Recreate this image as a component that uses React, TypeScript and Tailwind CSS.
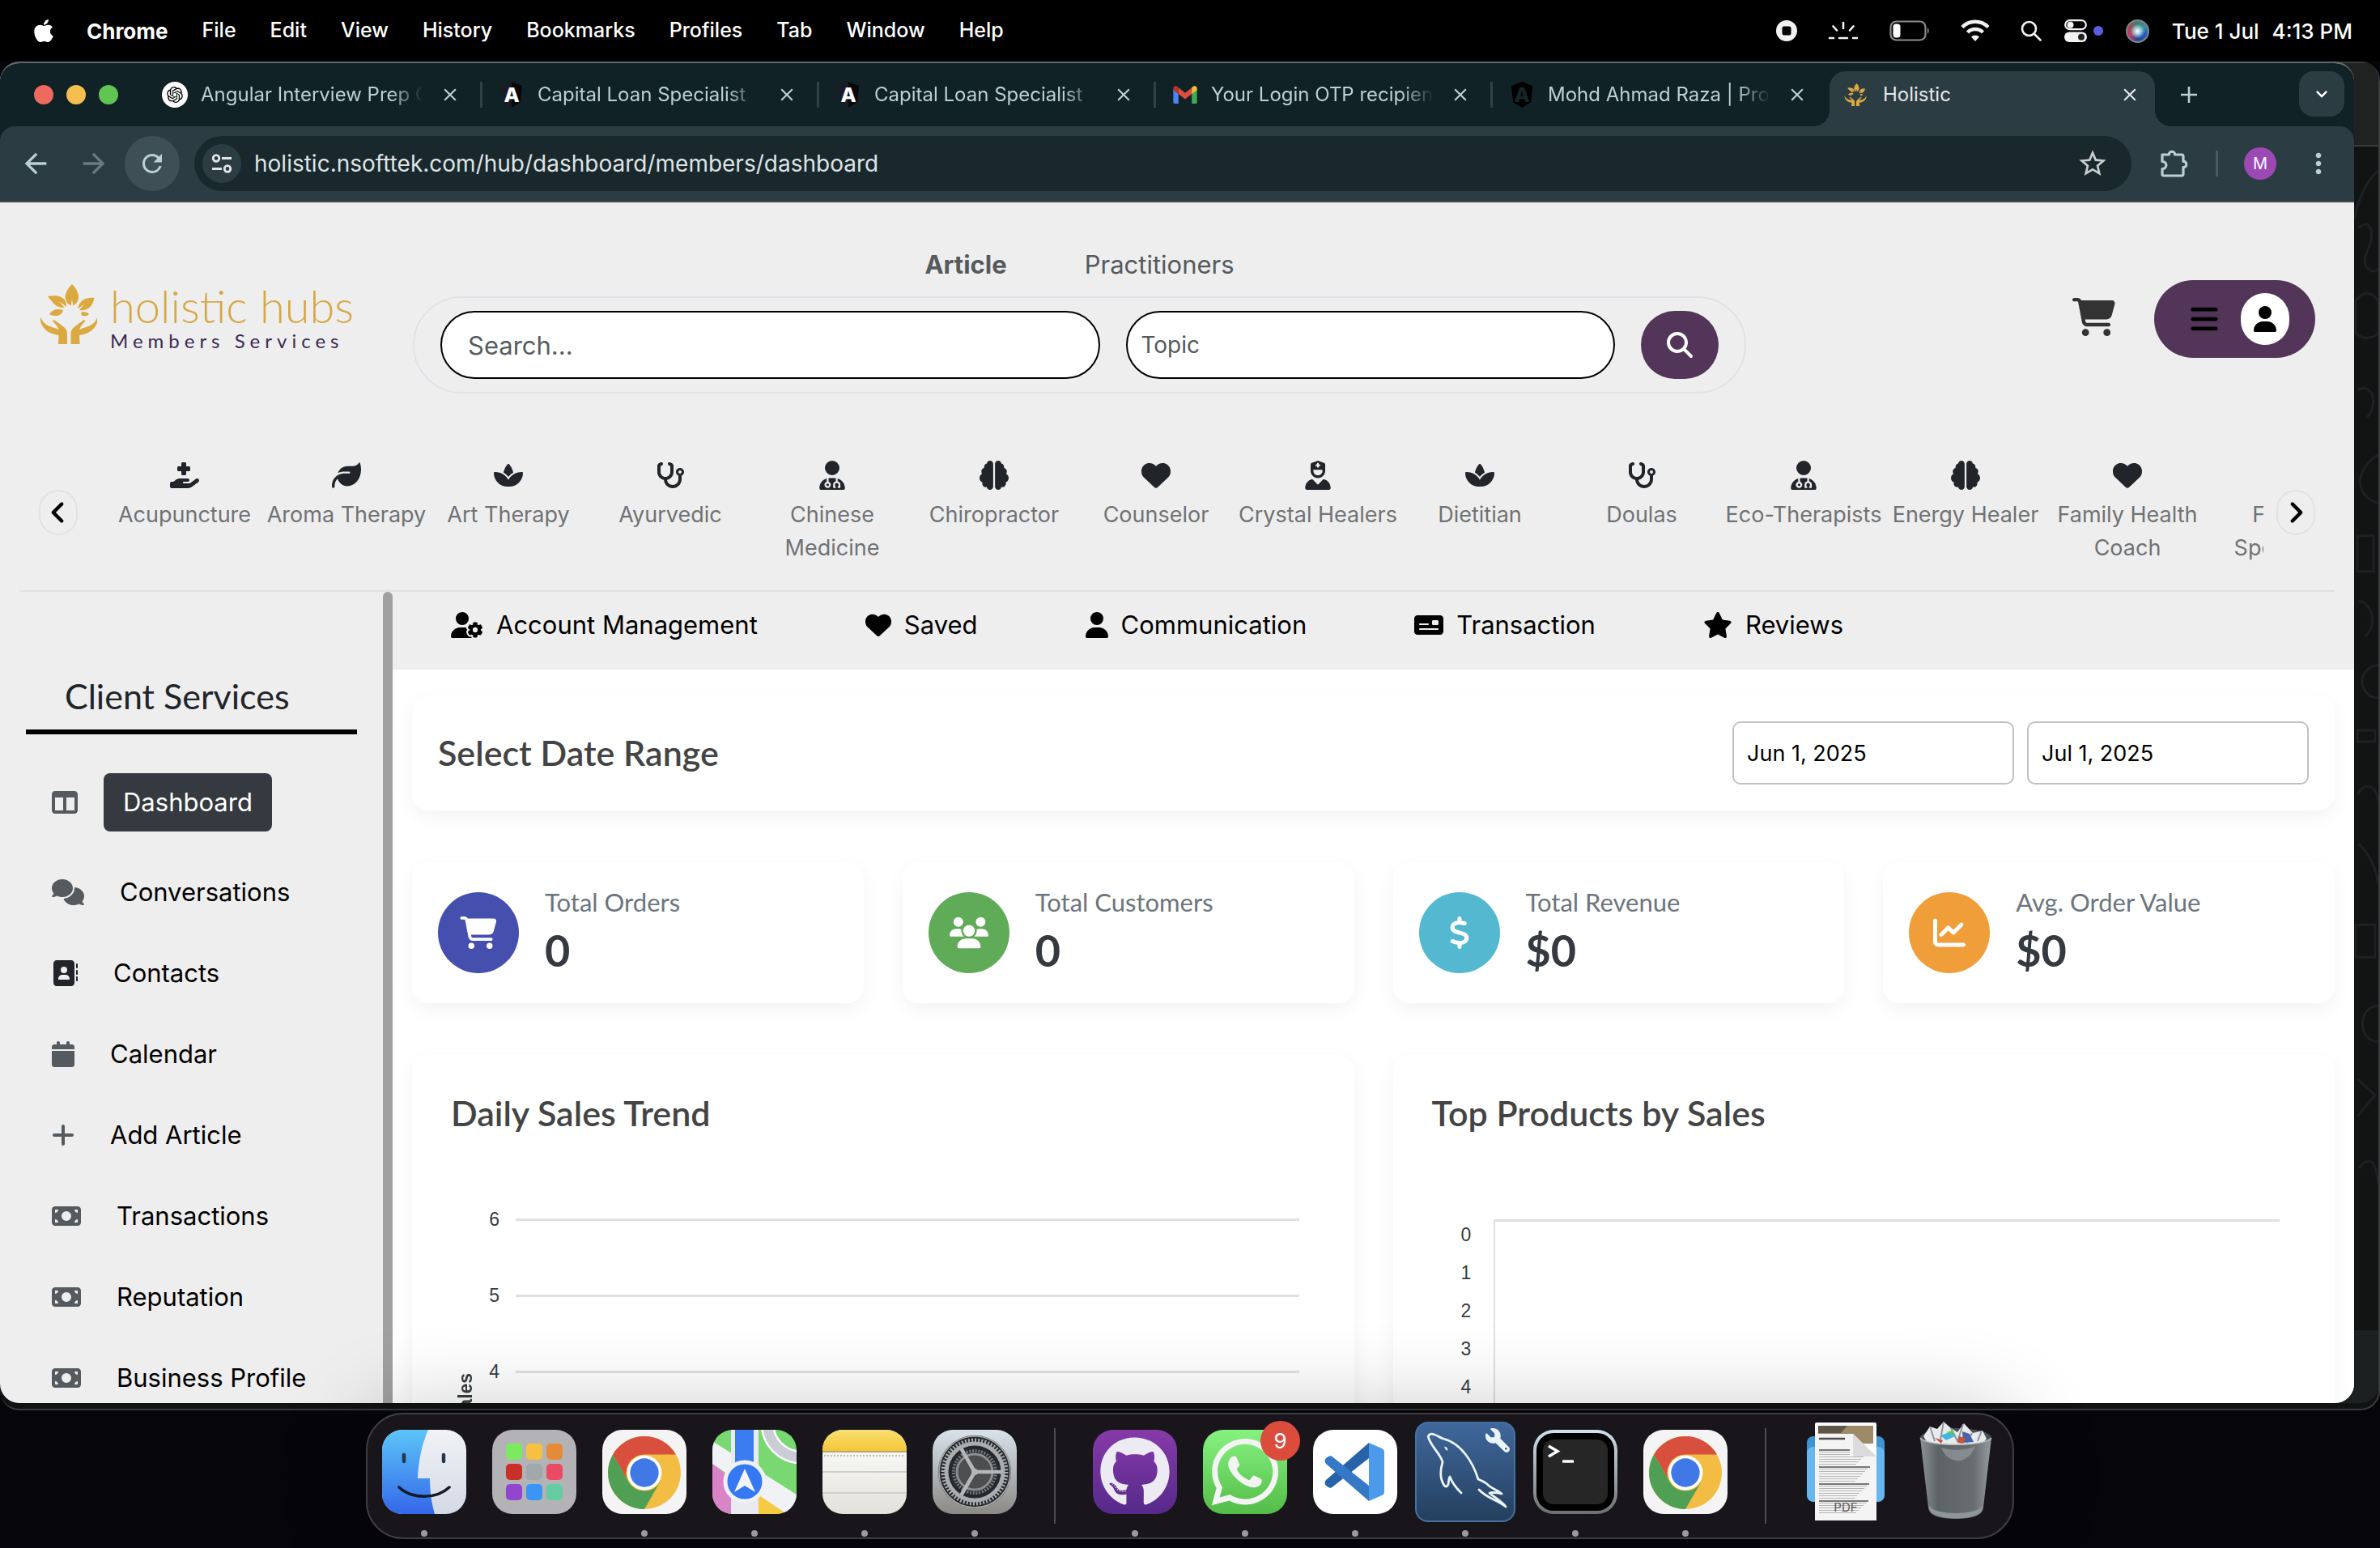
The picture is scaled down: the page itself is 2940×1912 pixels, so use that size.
import React from "react";
import {
  FaAddressBook, FaApple, FaBars, FaBrain, FaCalendar, FaCartShopping, FaChartLine, FaComments, FaDollarSign,
  FaGithub, FaHandHoldingMedical, FaHeart, FaLeaf, FaMagnifyingGlass, FaMoneyBill, FaMoneyCheck, FaPlus, FaSpa,
  FaStar, FaStethoscope, FaTableColumns, FaUser, FaUserDoctor, FaUserGear, FaUserNurse, FaUsers, FaWhatsapp, FaWrench,
} from "react-icons/fa6";
import { BsChevronLeft, BsChevronRight } from "react-icons/bs";
import { MdArrowBack, MdArrowForward, MdClose, MdKeyboardArrowDown, MdMoreVert, MdRefresh, MdStarBorder } from "react-icons/md";
import { RiOpenaiFill } from "react-icons/ri";

/* ---------- menu bar ---------- */

const MENUS = ["File", "Edit", "View", "History", "Bookmarks", "Profiles", "Tab", "Window", "Help"];

function MenuBar() {
  return (
    <header className="flex h-[76px] shrink-0 items-center bg-black pr-[34px] pl-[38px] text-[25px] font-medium text-white">
      <FaApple className="mr-[37px] size-[32px]" />
      <nav className="flex items-center gap-[42px]">
        <button className="text-[26px] font-bold">Chrome</button>
        {MENUS.map((m) => (
          <button key={m}>{m}</button>
        ))}
      </nav>
      <div className="ml-auto flex items-center gap-7">
        <div className="flex items-center gap-[38px]">
          <svg className="size-[26px]" viewBox="0 0 26 26" fill="#f2f2f2">
            <path fillRule="evenodd" d="M13 0a13 13 0 1 1 0 26a13 13 0 0 1 0-26zM10 7.500a2.500 2.500 0 0 0-2.500 2.500v6a2.500 2.500 0 0 0 2.500 2.500h6a2.500 2.500 0 0 0 2.500-2.500v-6a2.500 2.500 0 0 0-2.500-2.500z" />
          </svg>
          <svg className="h-[26px] w-[38px]" viewBox="0 0 38 26" stroke="#f2f2f2" strokeLinecap="round" strokeWidth="2.600" fill="none">
            <path d="M19 3v7M6.500 7.500l4.500 5M31.500 7.500l-4.500 5M2 22h5M14 22h10M31 22h5" />
          </svg>
          <svg className="h-[26px] w-[50px]" viewBox="0 0 50 26" fill="none">
            <rect x="1.500" y="1.500" width="43" height="23" rx="7" stroke="#8c8c8c" strokeWidth="2.200" />
            <rect x="4.500" y="4.500" width="9" height="17" rx="3.500" fill="#fff" />
            <path d="M47 9q3.500 4 0 8z" fill="#8c8c8c" />
          </svg>
          <svg className="h-[28px] w-[36px]" viewBox="0 0 36 28" fill="none" stroke="#f2f2f2" strokeWidth="4.500">
            <path d="M2 9.500a22.500 22.500 0 0 1 32 0M8.500 16a13.500 13.500 0 0 1 19 0" />
            <path d="M18 27l-5-5.500a7 7 0 0 1 10 0z" fill="#f2f2f2" stroke="none" />
          </svg>
          <svg className="size-[26px]" viewBox="0 0 26 26" fill="none" stroke="#f2f2f2" strokeWidth="2.600" strokeLinecap="round">
            <circle cx="10.500" cy="10.500" r="8.500" />
            <path d="M17 17l7.500 7.500" />
          </svg>
        </div>
        <div className="flex items-center gap-2">
          <svg className="h-[28px] w-[28px]" viewBox="0 0 28 28" fill="none">
            <rect x="1.200" y="1.200" width="25.600" height="11" rx="5.500" stroke="#f2f2f2" strokeWidth="2.200" />
            <circle cx="7.500" cy="6.700" r="4" fill="#f2f2f2" />
            <rect x="0" y="15.500" width="28" height="12.500" rx="6.200" fill="#f2f2f2" />
            <circle cx="21" cy="21.700" r="4" fill="#222" />
          </svg>
          <span className="size-3 rounded-full bg-[#5e5ce6]" />
        </div>
        <span className="size-[29px] rounded-full border-2 border-[#7a8590] bg-[radial-gradient(circle_at_50%_50%,#ffffff_0%,#9fd0e0_22%,transparent_50%),conic-gradient(#3f7f6d,#3a8f9a,#2455c0,#2b4a8c,#c23c6a,#9a4b52,#3f7f6d)]" />
        <div className="flex gap-4 text-[26px]">
          <span>Tue 1 Jul</span>
          <span>4:13 PM</span>
        </div>
      </div>
    </header>
  );
}

/* ---------- browser chrome ---------- */

function LotusMark({ className }: { className: string }) {
  return (
    <svg className={className} viewBox="0 0 70 74" fill="#dba93f">
      <path d="M39 0c6 6 8.500 12 8 17c-.4 4.500-3.500 8-7 9.500c-.3-4-.6-6-1-8c-.4 2-.7 4-1 8c-4-1.500-7-5-7.300-9.500C30.300 12 33 6 39 0z" />
      <path d="M9 15c9-2 17-.5 20.500 4c2 2.600 2.800 6 2.500 9c-2.500-2.500-6-5-9-6c2.500 2 5 4.500 6.500 7c-6 0-10-2-13-5c-2.500-2.600-5-5.500-7.500-9z" />
      <path d="M66.500 17c-8-.8-14 1.500-17 5.500c-2 2.500-3 5-3.500 8c3-2.500 6-4.500 9-5.500c-3 2-5.500 4.500-7 7c6 .8 10-.8 13-3.500c3-3 4.500-7 5.500-11.500z" />
      <path d="M11 37c4-6 10-7 17-5c-1.500 5-4.500 7-9 7c-3 0-6-.5-8-2zM50 35c3-1.500 7-.8 10 1.500c-1.500 3.500-7.500 3.500-9.500 1.500z" />
      <path d="M.5 41c2 6.500 7 10 15 12.500c3.500 1 5 1.500 7 3c-1-4.500-4-7-7-10.500c-.8-1.300.5-2.500 2-1.500c4 3 8.500 6 12.500 9.500c2.500 2.500 3 5 3 8V74H22l.5-11C12 62 1 56-.5 43z" />
      <path d="M70 41c-2 6.500-7 10-15 12.500c-3.500 1-5 1.500-7 3c1-4.500 4-7 7-10.500c.8-1.300-.5-2.500-2-1.500c-4 3-8.500 6-12.500 9.500c-2.500 2.500-3 5-3 8V74h11l-.5-11C58.500 62 69.500 56 71 43z" />
    </svg>
  );
}

function AngularMark({ dim }: { dim?: boolean }) {
  return (
    <svg className="size-8" viewBox="0 0 32 32">
      <path d="M16 0l13 5-2 20-11 7-11-7L3 5z" fill={dim ? "#000" : "#1c1b24"} />
      <path d="M16 0l13 5-2 20-11 7z" fill={dim ? "#000" : "#07070c"} />
      <text x="16" y="25" textAnchor="middle" fontSize="25" fontWeight="800" fill={dim ? "#15262b" : "#fff"}>A</text>
    </svg>
  );
}

function GmailMark() {
  return (
    <svg className="h-[22px] w-8" viewBox="0 0 32 24">
      <path d="M0 4v18a2 2 0 0 0 2 2h5V10z" fill="#4a86ef" />
      <path d="M32 4v18a2 2 0 0 1-2 2h-5V10z" fill="#3faa58" />
      <path d="M7 2.500l9 7 9-7v8.500l-9 7-9-7z" fill="#e34b3d" />
      <path d="M0 4c0-4 4-5 7-1.500V11L0 5.700z" fill="#b9342a" />
      <path d="M32 4c0-4-4-5-7-1.500V11l7-5.300z" fill="#f3bd35" />
    </svg>
  );
}

function ExtensionsMark() {
  return (
    <svg className="size-10" viewBox="0 0 40 40" fill="none" stroke="currentColor" strokeWidth="3.200" strokeLinejoin="round">
      <path d="M6 9h8.500c-.5-5 7.500-5 7 0H30a2 2 0 0 1 2 2v6.500c5-.5 5 7.500 0 7V33a2 2 0 0 1-2 2H8a2 2 0 0 1-2-2v-6.500c6.500 0 6.500-9 0-9z" />
    </svg>
  );
}

const TABS: { title: string; icon: React.ReactNode }[] = [
  {
    title: "Angular Interview Prep Guide",
    icon: (
      <span className="flex size-8 items-center justify-center rounded-full bg-white">
        <RiOpenaiFill className="size-6 text-black" />
      </span>
    ),
  },
  { title: "Capital Loan Specialist", icon: <AngularMark /> },
  { title: "Capital Loan Specialist", icon: <AngularMark /> },
  { title: "Your Login OTP recipient", icon: <GmailMark /> },
  { title: "Mohd Ahmad Raza | Profile", icon: <AngularMark dim /> },
];

function TabStrip() {
  return (
    <div className="flex h-[78px] shrink-0 items-stretch bg-[#112226] text-[24px] text-[#bacfd6]">
      <div className="flex w-[180px] shrink-0 items-center gap-4 pl-[42px]">
        <button aria-label="Close window" className="size-6 rounded-full bg-[#ed6a5f]" />
        <button aria-label="Minimise window" className="size-6 rounded-full bg-[#f5bf4f]" />
        <button aria-label="Zoom window" className="size-6 rounded-full bg-[#61c554]" />
      </div>
      {TABS.map((t, i) => (
        <div key={i} className="flex w-[416px] items-center pl-5">
          {t.icon}
          <span className="ml-4 flex-1 overflow-hidden [mask-image:linear-gradient(to_right,#000_85%,transparent)] whitespace-nowrap">{t.title}</span>
          <button aria-label="Close tab" className="ml-5 mr-6">
            <MdClose className="size-[26px]" />
          </button>
          <span className={i < 4 ? "h-8 w-[3px] bg-[#2f4147]" : "h-8 w-[3px]"} />
        </div>
      ))}
      <div className="relative mt-[10px] flex w-[402px] items-center rounded-t-[20px] bg-[#2c3c43] pb-[10px] pl-[18px] text-[#e2e8ea]">
        <span className="absolute bottom-0 -left-5 size-5 bg-[radial-gradient(circle_at_0_0,transparent_20px,#2c3c43_20px)]" />
        <span className="absolute -right-5 bottom-0 size-5 bg-[radial-gradient(circle_at_100%_0,transparent_20px,#2c3c43_20px)]" />
        <LotusMark className="size-7" />
        <span className="ml-5 flex-1">Holistic</span>
        <button aria-label="Close tab" className="mr-[18px]">
          <MdClose className="size-[26px]" />
        </button>
      </div>
      <button aria-label="New tab" className="ml-8">
        <svg className="size-5" viewBox="0 0 20 20" stroke="currentColor" strokeWidth="2.600"><path d="M10 0v20M0 10h20" /></svg>
      </button>
      <button aria-label="Search tabs" className="mr-3 ml-auto mt-[10px] flex size-14 items-center justify-center rounded-[18px] bg-[#2c3c43] text-white">
        <MdKeyboardArrowDown className="size-7" />
      </button>
    </div>
  );
}

function Toolbar() {
  return (
    <div className="bg-[#112226]">
      <div className="flex h-[94px] items-center rounded-t-[18px] border-b-2 border-[#454a4c] bg-[#2c3c43] pr-6 pl-6 text-[#bacfd6]">
        <button aria-label="Back"><MdArrowBack className="size-10" /></button>
        <button aria-label="Forward" className="ml-8 text-[#6d7a7f]"><MdArrowForward className="size-10" /></button>
        <button aria-label="Reload" className="ml-[18px] flex size-[68px] items-center justify-center rounded-full bg-[#3f4f56]">
          <MdRefresh className="size-9" />
        </button>
        <div className="ml-[18px] flex h-[68px] flex-1 items-center rounded-full bg-[#18282d] pl-[10px] pr-7">
          <span className="flex size-12 items-center justify-center rounded-full bg-[#2c3c43]">
            <svg className="size-[26px]" viewBox="0 0 26 26" fill="none" stroke="#dfe6e8" strokeWidth="2.800">
              <circle cx="6" cy="6.500" r="3.800" />
              <path d="M13 6.500h12M1 19.500h12" />
              <circle cx="20" cy="19.500" r="3.800" />
            </svg>
          </span>
          <input aria-label="Address" className="ml-4 flex-1 bg-transparent text-[28px] text-[#dfe3e4] outline-none" defaultValue="holistic.nsofttek.com/hub/dashboard/members/dashboard" />
          <button aria-label="Bookmark this page" className="text-[#c9cfd1]"><MdStarBorder className="size-10" /></button>
        </div>
        <button aria-label="Extensions" className="ml-8"><ExtensionsMark /></button>
        <span className="ml-8 h-8 w-[3px] bg-[#4a5a61]" />
        <button className="ml-8 flex size-10 items-center justify-center rounded-full bg-[#9d49b5] text-[20px] text-white">M</button>
        <button aria-label="Menu" className="ml-8"><MdMoreVert className="size-10" /></button>
      </div>
    </div>
  );
}

/* ---------- site header ---------- */

const CATEGORIES = [
  { name: "Acupuncture", Icon: FaHandHoldingMedical },
  { name: "Aroma Therapy", Icon: FaLeaf },
  { name: "Art Therapy", Icon: FaSpa },
  { name: "Ayurvedic", Icon: FaStethoscope },
  { name: "Chinese Medicine", Icon: FaUserDoctor, wrap: true },
  { name: "Chiropractor", Icon: FaBrain },
  { name: "Counselor", Icon: FaHeart },
  { name: "Crystal Healers", Icon: FaUserNurse },
  { name: "Dietitian", Icon: FaSpa },
  { name: "Doulas", Icon: FaStethoscope },
  { name: "Eco-Therapists", Icon: FaUserDoctor },
  { name: "Energy Healer", Icon: FaBrain },
  { name: "Family Health Coach", Icon: FaHeart, wrap: true },
  { name: "Fitness Specialists", Icon: FaUserNurse, wrap: true },
];

function SiteHeader() {
  return (
    <header className="mx-6 border-b-2 border-[#dfe1e6] px-6 pb-8">
      <div className="flex items-start">
        <a href="#home" className="mt-[101px] flex w-[462px] shrink-0 items-start">
          <LotusMark className="ml-[2px] h-[74px] w-[70px]" />
          <span className="ml-4 flex flex-col">
            <span className="font-[Lato] text-[56px] leading-[54px] font-light text-[#d6a845]">holistic hubs</span>
            <span className="mt-[2px] font-[Lato] text-[24px] leading-[28px] tracking-[6px] text-[#3a2a52]">Members Services</span>
          </span>
        </a>
        <div className="flex-1 pt-[53px]">
          <div className="flex h-12 items-center justify-center gap-24 text-[31px] text-[#555a5e]">
            <button className="font-bold">Article</button>
            <button>Practitioners</button>
          </div>
          <form className="mt-[15px] grid grid-cols-[816fr_604fr_96px] gap-8 rounded-full border-2 border-[#dfe2e8] px-8 py-4" onSubmit={(e) => e.preventDefault()}>
            <input aria-label="Search" placeholder="Search..." className="h-[84px] w-full rounded-full border-2 border-black bg-white px-8 text-[31px] placeholder:text-[#595c5f]" />
            <select aria-label="Topic" className="h-[84px] w-full appearance-none rounded-full border-2 border-black bg-white px-4 text-[28px] text-[#55595c]">
              <option>Topic</option>
            </select>
            <button aria-label="Search" className="flex h-[84px] items-center justify-center rounded-full bg-[#533559] text-white">
              <FaMagnifyingGlass className="size-8" />
            </button>
          </form>
        </div>
        <div className="flex items-center gap-12 pt-24 pl-[403px]">
          <button aria-label="Cart" className="pb-[6px] text-[#333]"><FaCartShopping className="size-[53px]" /></button>
          <button aria-label="Account menu" className="flex h-24 w-[199px] items-center justify-end gap-[26px] rounded-full bg-[#533559] pr-8 text-black">
            <FaBars className="size-[38px]" />
            <span className="flex h-16 w-[60px] items-center justify-center rounded-full bg-white">
              <FaUser className="size-8" />
            </span>
          </button>
        </div>
      </div>
      <div className="mt-[83px] flex items-center">
        <button aria-label="Previous" className="flex h-14 w-12 shrink-0 items-center justify-center rounded-full border-2 border-[#dfe2e8] pr-[2px]">
          <BsChevronLeft className="size-7" strokeWidth={1.5} />
        </button>
        <ul className="mr-4 ml-8 flex flex-1 overflow-hidden">
          {CATEGORIES.map(({ name, Icon, wrap }) => (
            <li key={name} className="w-[200px] shrink-0">
              <a href="#category" className="flex flex-col items-center text-center text-[27px] leading-[41px] text-[#707274]">
                <Icon className="mb-[10px] size-9 text-[#212529]" />
                <span className={wrap ? "w-[180px]" : "whitespace-nowrap"}>{name}</span>
              </a>
            </li>
          ))}
        </ul>
        <button aria-label="Next" className="flex h-14 w-12 shrink-0 items-center justify-center rounded-full border-2 border-[#dfe2e8] pl-[2px]">
          <BsChevronRight className="size-7" strokeWidth={1.5} />
        </button>
      </div>
    </header>
  );
}

/* ---------- sidebar ---------- */

const SIDE_LINKS = [
  { name: "Conversations", Icon: FaComments, icon: "w-10 text-[#555a5e]" },
  { name: "Contacts", Icon: FaAddressBook, icon: "w-8 text-[#212529]" },
  { name: "Calendar", Icon: FaCalendar, icon: "w-7 text-[#555a5e]" },
  { name: "Add Article", Icon: FaPlus, icon: "w-7 text-[#555a5e]" },
  { name: "Transactions", Icon: FaMoneyBill, icon: "w-9 text-[#555a5e]" },
  { name: "Reputation", Icon: FaMoneyBill, icon: "w-9 text-[#555a5e]" },
  { name: "Business Profile", Icon: FaMoneyBill, icon: "w-9 text-[#555a5e]" },
];

function Sidebar() {
  return (
    <aside className="flex w-[485px] shrink-0 overflow-hidden">
      <div className="min-w-0 flex-1 px-8 pt-[105px] text-[31px] text-black">
        <h2 className="border-b-[6px] border-black pb-[17px] pl-12 font-[Lato] text-[43px] leading-[48px] text-[#212529]">Client Services</h2>
        <nav>
          <a href="#dashboard" className="mt-12 flex items-center gap-8 pl-8">
            <FaTableColumns className="h-8 w-8 text-[#555a5e]" />
            <span className="rounded-lg bg-[#343a3f] px-6 py-3 leading-[48px] text-white">Dashboard</span>
          </a>
          <ul className="mt-[25px]">
            {SIDE_LINKS.map(({ name, Icon, icon }) => (
              <li key={name}>
                <a href="#section" className="flex h-[100px] items-center gap-11 pl-8">
                  <Icon className={"h-8 " + icon} />
                  {name}
                </a>
              </li>
            ))}
          </ul>
        </nav>
      </div>
      <div className="w-3 rounded-t-md bg-[#a0a0a0]" />
    </aside>
  );
}

/* ---------- dashboard ---------- */

const TOP_LINKS = [
  { name: "Account Management", Icon: FaUserGear, icon: "w-10" },
  { name: "Saved", Icon: FaHeart, icon: "w-8" },
  { name: "Communication", Icon: FaUser, icon: "w-7" },
  { name: "Transaction", Icon: FaMoneyCheck, icon: "w-9" },
  { name: "Reviews", Icon: FaStar, icon: "w-9" },
];

const STATS = [
  { name: "Total Orders", value: "0", Icon: FaCartShopping, tint: "bg-[#444fae]" },
  { name: "Total Customers", value: "0", Icon: FaUsers, tint: "bg-[#5fab57]" },
  { name: "Total Revenue", value: "$0", Icon: FaDollarSign, tint: "bg-[#54b8d1]" },
  { name: "Avg. Order Value", value: "$0", Icon: FaChartLine, tint: "bg-[#f09e39]" },
];

function Card({ className, children }: { className: string; children: React.ReactNode }) {
  return <section className={"rounded-[20px] bg-white shadow-[0_8px_24px_rgba(0,0,0,0.05)] " + className}>{children}</section>;
}

function DateField({ label, value }: { label: string; value: string }) {
  return <input aria-label={label} defaultValue={value} className="h-[78px] w-[348px] rounded-[10px] border-2 border-[#c1c1c1] bg-white px-4 text-[27px] text-black" />;
}

function Dashboard() {
  return (
    <main className="min-w-0 flex-1 overflow-hidden bg-white">
      <nav className="flex h-24 gap-[133px] bg-[#eeeeee] pb-[14px] pl-[72px] text-[31px] text-black">
        {TOP_LINKS.map(({ name, Icon, icon }) => (
          <a key={name} href="#section" className="flex items-center gap-4">
            <Icon className={"h-8 " + icon} />
            {name}
          </a>
        ))}
      </nav>
      <div className="px-6 pt-8">
        <Card className="flex h-[142px] items-center gap-4 px-8">
          <h2 className="flex-1 font-[Lato] text-[43px] font-semibold text-[#444]">Select Date Range</h2>
          <DateField label="From" value="Jun 1, 2025" />
          <DateField label="To" value="Jul 1, 2025" />
        </Card>
        <div className="mt-16 grid grid-cols-4 gap-12">
          {STATS.map(({ name, value, Icon, tint }) => (
            <Card key={name} className="flex h-[174px] items-center gap-8 px-8">
              <span className={"flex size-[100px] shrink-0 items-center justify-center rounded-full text-white " + tint}>
                <Icon className="h-10 w-12" />
              </span>
              <div className="font-[Lato]">
                <div className="text-[31px] leading-[44px] text-[#6c757d]">{name}</div>
                <div className="text-[54px] leading-[76px] font-bold text-[#343a40]">{value}</div>
              </div>
            </Card>
          ))}
        </div>
        <div className="mt-16 grid grid-cols-2 gap-12 font-[Liberation_Sans] text-[23px] text-[#373d3f]">
          <Card className="h-[700px] px-12 pt-12">
            <h3 className="font-[Lato] text-[43px] leading-[48px] font-semibold text-[#444]">Daily Sales Trend</h3>
            <div className="mt-[60px] flex pr-5 pl-1">
              <span className="mt-[237px] h-[80px] rotate-180 text-right leading-7 font-bold [writing-mode:vertical-rl]">Sales</span>
              <ol className="ml-2 flex-1">
                {["6", "5", "4", "3"].map((n) => (
                  <li key={n} className="flex h-[94px] items-center gap-5">
                    <span className="w-5 text-right">{n}</span>
                    <span className="h-[3px] flex-1 bg-[#e0e0e0]" />
                  </li>
                ))}
              </ol>
            </div>
          </Card>
          <Card className="h-[700px] px-12 pt-12">
            <h3 className="font-[Lato] text-[43px] leading-[48px] font-semibold text-[#444]">Top Products by Sales</h3>
            <div className="mt-[107px] flex gap-7 pr-5 pl-9">
              <ol className="-mt-[4px]">
                {["0", "1", "2", "3", "4", "5"].map((n) => (
                  <li key={n} className="h-[47px] leading-[47px]">{n}</li>
                ))}
              </ol>
              <div className="flex-1 border-t-[3px] border-l-2 border-[#e0e0e0]" />
            </div>
          </Card>
        </div>
      </div>
    </main>
  );
}

/* ---------- dock ---------- */

function FinderIcon() {
  return (
    <svg viewBox="0 0 104 104" className="size-[104px]">
      <defs>
        <linearGradient id="fa" x2="0" y2="1"><stop stopColor="#5cc5f8" /><stop offset="1" stopColor="#3467ea" /></linearGradient>
        <linearGradient id="fb" x2="0" y2="1"><stop stopColor="#f1f2f5" /><stop offset="1" stopColor="#d3dae6" /></linearGradient>
        <clipPath id="fc"><rect width="104" height="104" rx="25" /></clipPath>
      </defs>
      <g clipPath="url(#fc)">
        <rect width="104" height="104" fill="url(#fb)" />
        <path d="M0 0h57C49 18 45 38 44 60h15c0 16 2 30 6 44H0z" fill="url(#fa)" />
      </g>
      <path d="M27 31v8M76 31v8" stroke="#26384d" strokeWidth="4.500" strokeLinecap="round" />
      <path d="M21 71c16 15 46 15 62 0" stroke="#141a26" strokeWidth="3.500" fill="none" strokeLinecap="round" />
    </svg>
  );
}

const PAD_COLORS = ["#7bea5e", "#f6c142", "#e58a37", "#c9302a", "#a0a8ab", "#ea4a63", "#9245cf", "#3a95f5", "#64cba2"];

function LaunchpadIcon() {
  return (
    <svg viewBox="0 0 104 104" className="size-[104px]">
      <rect width="104" height="104" rx="25" fill="#b3b3b6" />
      {PAD_COLORS.map((c, i) => (
        <rect key={c} x={17 + (i % 3) * 25} y={17 + Math.floor(i / 3) * 25} width="20" height="20" rx="5" fill={c} />
      ))}
    </svg>
  );
}

function ChromeIcon() {
  return (
    <svg viewBox="0 0 104 104" className="size-[104px]">
      <rect width="104" height="104" rx="25" fill="#f4f4f4" />
      <g transform="translate(-1.500 -.5) scale(1.070)">
        <circle cx="50" cy="50" r="42" fill="#f2bd42" />
        <path d="M13.600 29A42 42 0 0 1 86.400 29H50A21 21 0 0 0 31.800 60.500z" fill="#d94f3d" />
        <path d="M13.600 29A42 42 0 0 0 50 92L68.200 60.500A21 21 0 0 1 31.800 60.500z" fill="#4f9f55" />
        <circle cx="50" cy="50" r="20" fill="#fff" />
        <circle cx="50" cy="50" r="16.500" fill="#4079e6" />
      </g>
    </svg>
  );
}

function MapsIcon() {
  return (
    <svg viewBox="0 0 104 104" className="size-[104px]">
      <clipPath id="mc"><rect width="104" height="104" rx="25" /></clipPath>
      <g clipPath="url(#mc)">
        <rect width="104" height="104" fill="#7ad872" />
        <path d="M0 40l26 24v40H0z" fill="#da84c8" />
        <path d="M50 70l50 34H50z" fill="#f4cb41" />
        <path d="M0 14L104 80v24h-12L0 42z" fill="#f1f2f5" />
        <path d="M23 0h34v104H23z" fill="#e9ebf0" />
        <path d="M28 0h23v52H28z" fill="#3b7df0" />
        <path d="M68 -8a42 42 0 0 0 42 42" fill="none" stroke="#fff" strokeWidth="17" />
        <path d="M68 -8a42 42 0 0 0 42 42" fill="none" stroke="#cacdd6" strokeWidth="12" />
      </g>
      <circle cx="40" cy="64" r="24" fill="#3478f3" stroke="#eff1f5" strokeWidth="5" />
      <path d="M40 48l13 29-13-8-13 8z" fill="#f3f5f9" />
    </svg>
  );
}

function NotesIcon() {
  return (
    <svg viewBox="0 0 104 104" className="size-[104px]">
      <defs>
        <linearGradient id="nb" x2="0" y2="1"><stop stopColor="#fff" /><stop offset="1" stopColor="#e2e1da" /></linearGradient>
        <linearGradient id="ny" x2="0" y2="1"><stop stopColor="#f8de72" /><stop offset="1" stopColor="#f5c735" /></linearGradient>
        <clipPath id="nc"><rect width="104" height="104" rx="25" /></clipPath>
      </defs>
      <g clipPath="url(#nc)">
        <rect width="104" height="104" fill="url(#nb)" />
        <rect width="104" height="26" fill="url(#ny)" />
        <path d="M0 27h104" stroke="#a28b4e" strokeWidth="1.500" />
        <path d="M2 32h100" stroke="#bdbdb8" strokeWidth="2" strokeDasharray="2 2" />
        <path d="M0 52h104M0 78h104" stroke="#cfcfd1" strokeWidth="2" />
      </g>
    </svg>
  );
}

function SettingsIcon() {
  return (
    <svg viewBox="0 0 104 104" className="size-[104px]" fill="none">
      <defs><linearGradient id="sg" x2="0" y2="1"><stop stopColor="#d9e3ea" /><stop offset="1" stopColor="#8b8985" /></linearGradient></defs>
      <rect width="104" height="104" rx="25" fill="url(#sg)" />
      <circle cx="52" cy="52" r="45" fill="#26282a" />
      <circle cx="52" cy="52" r="44" stroke="#a9adaf" strokeWidth="1.500" />
      <circle cx="52" cy="52" r="39" stroke="#a9adaf" strokeWidth="5" strokeDasharray="2 2.080" />
      <circle cx="52" cy="52" r="35" stroke="#a9adaf" strokeWidth="5" />
      <circle cx="52" cy="52" r="26" stroke="#77797a" strokeWidth="4" strokeDasharray="2 1.710" />
      <circle cx="52" cy="52" r="22" fill="#4d4e4e" stroke="#8d8f90" strokeWidth="3" />
      <path d="M52 52h33M52 52L35.500 23.500M52 52L35.500 80.500" stroke="#b4b8ba" strokeWidth="4.500" />
      <circle cx="52" cy="52" r="4" fill="#b4b8ba" />
    </svg>
  );
}

function VsCodeIcon() {
  return (
    <svg viewBox="0 0 104 104" className="size-[104px]">
      <rect width="104" height="104" rx="25" fill="#fff" />
      <path d="M69 16L16 62c-2 2-2 5 0 7l3 2c1.500 1 3 1 4.500 0L69 35z" fill="#2763a8" />
      <path d="M69 88L16 42c-2-2-2-5 0-7l3-2c1.500-1 3-1 4.500 0L69 69z" fill="#3478c6" />
      <path d="M69 16l16 7c2 1 3 2.500 3 4.500v49c0 2-1 3.500-3 4.500l-16 7z" fill="#4b9bea" />
    </svg>
  );
}

function MySqlIcon() {
  return (
    <svg viewBox="0 0 124 124" className="size-[124px]">
      <defs><linearGradient id="my" x2="0" y2="1"><stop stopColor="#40689c" /><stop offset="1" stopColor="#243f5e" /></linearGradient></defs>
      <rect x="1" y="1" width="122" height="122" rx="15" fill="url(#my)" stroke="#47719f" strokeWidth="2" />
      <path
        d="M34 51C32 42 22 34 17 22c-2-5 2-7 7-5 4 1 7 4 11 5 22 6 36 28 43 50 4 2 10 4 13 8 5 4 12 6 16 10-4-1-11-2-15-1 5 5 15 10 20 17-10-8-24-11-33-21M34 51c-3 10-3 20 1 27 2 4 5 4 6 0 1-3 0-6 2-9 3 8 9 15 14 20"
        transform="translate(0 -1)"
        fill="none" stroke="#eaf4fb" strokeWidth="2.800" strokeLinejoin="round" strokeLinecap="round"
      />
      <path d="M36 31c3 0 5 2 4 5-2-1-3-3-4-5z" fill="#eaf4fb" />
      <g transform="translate(117 8) scale(-1 1)">
        <FaWrench size={30} color="#eaf4fb" />
      </g>
    </svg>
  );
}

function TerminalIcon() {
  return (
    <svg viewBox="0 0 104 104" className="size-[104px]">
      <defs><linearGradient id="tg" x2="0" y2="1"><stop stopColor="#cfe2ee" /><stop offset="1" stopColor="#6f6f70" /></linearGradient></defs>
      <rect width="104" height="104" rx="25" fill="url(#tg)" />
      <rect x="4" y="4" width="96" height="96" rx="21" fill="#000" />
      <rect x="12" y="12" width="80" height="80" rx="13" fill="#262626" />
      <path d="M19 20l11 6.500L19 33M36 39h14" fill="none" stroke="#fff" strokeWidth="3.500" />
    </svg>
  );
}

const PDF_LINES = Array.from({ length: 27 }, (_, i) => ({ y: 34 + i * 3, w: 44 + ((i * 17) % 20), strong: i % 7 === 0 }));

function DownloadsIcon() {
  return (
    <svg viewBox="0 0 100 124" className="h-[124px] w-[100px]">
      <rect x="2" y="18" width="96" height="80" rx="8" fill="#3f93cf" />
      <rect x="2" y="31" width="96" height="68" rx="8" fill="#67b7ee" />
      <rect x="12" y="1" width="76" height="121" rx="2" fill="#fbfbfb" />
      <rect x="16" y="5" width="68" height="22" fill="#9c8a68" />
      <path d="M16 5h36l-8 9H16z" fill="#5f564a" />
      <path d="M12 15h47l29 28v79H12z" fill="#f4f4f4" />
      <path d="M59 15l29 28H62c-2 0-3-1-3-3z" fill="#dcdcde" />
      <path d="M17 21h32" stroke="#4c4c4c" strokeWidth="2.500" />
      {PDF_LINES.map((l) => (
        <rect key={l.y} x="17" y={l.y} width={l.y < 43 ? 38 : l.w} height={l.strong ? 2 : 1} fill={l.strong ? "#777" : "#b5b5b5"} />
      ))}
      <text x="50" y="111" textAnchor="middle" fontSize="15" fill="#5a5a5a">PDF</text>
    </svg>
  );
}

function TrashIcon() {
  return (
    <svg viewBox="0 0 92 124" className="h-[124px] w-[92px]">
      <defs><linearGradient id="tr"><stop stopColor="#8c9296" /><stop offset=".25" stopColor="#5d6468" /><stop offset=".75" stopColor="#676d71" /><stop offset="1" stopColor="#969b9e" /></linearGradient></defs>
      <ellipse cx="46" cy="20" rx="44" ry="12" fill="#4b5154" />
      <path d="M6 18L14 6l9 3 8-9 9 8 8 5 8-11 11 12 12-3 5 10-6 7H12z" fill="#e9eaec" />
      <path d="M14 6l6 18M31 0l-4 22M55 3l-7 22M66 14l-6 12M40 8l8 16M78 11l-5 13" stroke="#8f959b" strokeWidth="2" />
      <path d="M27 17l14-5 4 6-11 5z" fill="#41b8dd" />
      <path d="M34 13l8-2 3 5z" fill="#65c256" />
      <path d="M54 12l9 3 5 10-13 1z" fill="#4464ad" />
      <path d="M50 18l8 2-3 7-7-1zM20 20l10 3-2 4z" fill="#c4563a" />
      <path d="M2 20c8 11 80 11 88 0L80 106c-1 10-14 14-34 14s-33-4-34-14z" fill="url(#tr)" />
      <path d="M2 20c8 11 80 11 88 0" fill="none" stroke="#b9bec1" strokeWidth="1.500" />
      <path d="M13 104c8 12 58 12 66 0l-1 5c-3 14-61 14-64 0z" fill="#8f969a" />
      <path d="M28 32c12 4 30 4 42-2-4 12-14 20-24 18s-15-8-18-16z" fill="#9ba1a4" opacity=".6" />
    </svg>
  );
}

function GlyphTile({ className, children }: { className: string; children: React.ReactNode }) {
  return <span className={"flex size-[104px] items-center justify-center rounded-[25px] " + className}>{children}</span>;
}

const DOCK: { name: string; art: React.ReactNode; running?: boolean; badge?: string; gapAfter?: boolean }[] = [
  { name: "Finder", art: <FinderIcon />, running: true },
  { name: "Launchpad", art: <LaunchpadIcon /> },
  { name: "Chrome", art: <ChromeIcon />, running: true },
  { name: "Maps", art: <MapsIcon />, running: true },
  { name: "Notes", art: <NotesIcon />, running: true },
  { name: "System Settings", art: <SettingsIcon />, running: true, gapAfter: true },
  { name: "GitHub Desktop", art: <GlyphTile className="bg-gradient-to-b from-[#873aa9] to-[#56298a]"><FaGithub className="size-[88px] text-[#eceaf2]" /></GlyphTile>, running: true },
  { name: "WhatsApp", art: <GlyphTile className="bg-gradient-to-b from-[#86f27f] to-[#54bd49]"><FaWhatsapp className="size-[94px] text-[#f4f4f4]" /></GlyphTile>, running: true, badge: "9" },
  { name: "VS Code", art: <VsCodeIcon />, running: true },
  { name: "MySQL Workbench", art: <MySqlIcon />, running: true },
  { name: "Terminal", art: <TerminalIcon />, running: true },
  { name: "Chrome Web App", art: <ChromeIcon />, running: true, gapAfter: true },
  { name: "Downloads", art: <DownloadsIcon /> },
  { name: "Bin", art: <TrashIcon /> },
];

function Dock() {
  return (
    <div className="z-10 mb-[11px] flex shrink-0 justify-center">
      <ul className="flex h-[156px] rounded-[46px] border-2 border-[#3f3d42] bg-[#18161b] px-[2px] shadow-[0_0_110px_rgba(0,0,0,0.24)]">
        {DOCK.map((d) => (
          <React.Fragment key={d.name}>
            <li className="relative flex w-[136px] items-center justify-center pb-[10px]">
              <button aria-label={d.name}>{d.art}</button>
              {d.badge && (
                <span className="absolute top-2 right-0 flex size-[49px] items-center justify-center rounded-full bg-[#dc4c3d] text-[26px] text-white">{d.badge}</span>
              )}
              {d.running && <span className="absolute bottom-[1px] size-2 rounded-full bg-[#9c9a9f]" />}
            </li>
            {d.gapAfter && <li className="mx-[30px] my-auto h-[118px] w-[2px] bg-[#4e4c51]" />}
          </React.Fragment>
        ))}
      </ul>
    </div>
  );
}

/* ---------- desktop ---------- */

export default function App() {
  return (
    <div className="flex h-screen w-full flex-col overflow-hidden bg-[#06050a] font-[Inter,sans-serif]">
      <MenuBar />
      <div className="mb-[3px] flex min-h-0 flex-1 rounded-[24px] border-r-2 border-b-2 border-[#3a3b3c] bg-[#101312] pb-[7px]">
        <div className="z-[1] flex min-w-0 flex-1 flex-col overflow-hidden rounded-[24px] border-t-2 border-[#5d696d] bg-[#eeeeee]">
          <TabStrip />
          <Toolbar />
          <SiteHeader />
          <div className="flex min-h-0 flex-1">
            <Sidebar />
            <Dashboard />
          </div>
        </div>
        <div className="-ml-6 flex w-[54px] flex-col overflow-hidden rounded-tr-[22px] rounded-br-[22px]">
          <div className="h-[105px] border-t-2 border-b-2 border-[#3a3b3c] bg-[#202121]" />
          <svg className="min-h-0 w-full flex-1 bg-[#121414]" viewBox="0 0 54 1460" preserveAspectRatio="xMaxYMin slice" fill="none" stroke="#1e2121" strokeWidth="3">
            <path d="M54 30c-16 12-26 40-30 60M30 100c16-14 20 10 10 30s10 30 14 20M26 190q14-18 28 0v40q-14 12-28 0zM28 300c20-10 26 20 12 34M54 380c-30 20-30 50 0 60M28 480h20v44H28zM30 560c18 6 22 30 8 44M54 640a20 20 0 1 0 0 40M28 720h22v14H28zM28 800c10-20 26-10 26 10M30 860q20 20 24 50M26 960h24v40H26zM54 1060c-26 0-26 44 0 44M28 1150l22 20-22 26M30 1260q20-24 24 20" />
          </svg>
          <div className="h-[90px] bg-[#1d2020]" />
        </div>
      </div>
      <Dock />
    </div>
  );
}
